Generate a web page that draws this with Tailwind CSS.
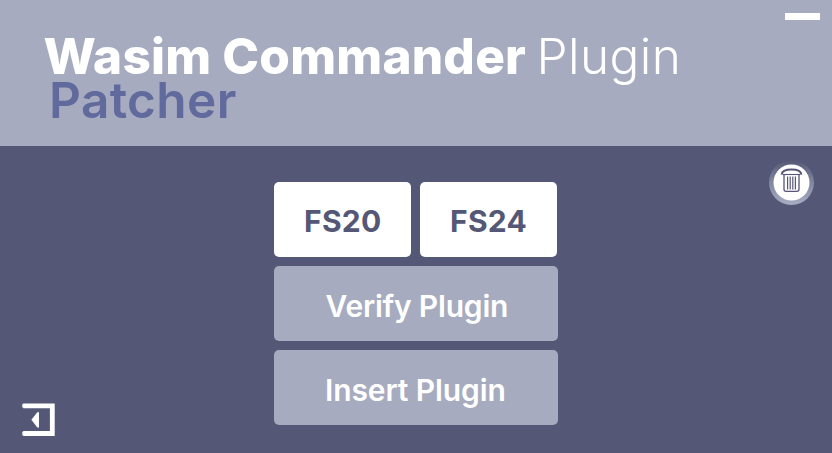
<!DOCTYPE html>
<html lang="en">
<head>
<meta charset="utf-8">
<title>Wasim Commander Plugin Patcher</title>
<script src="https://cdn.jsdelivr.net/npm/@tailwindcss/browser@4"></script>
</head>
<body class="flex h-screen w-screen flex-col overflow-hidden bg-[#545876] font-['Inter',sans-serif]">
<header class="flex h-[146px] shrink-0 items-start justify-between bg-[#a6abbf] pr-3">
  <h1 class="pt-[34px] pl-[43.5px] text-[49.5px] leading-[44px] whitespace-nowrap text-white">
    <span class="block"><span class="font-extrabold tracking-[0.2px]">Wasim Commander</span><span class="ml-[10.5px] font-light tracking-[0.4px]">Plugin</span></span>
    <span class="block pl-[5.5px] font-semibold tracking-[0.4px] text-[#616a9c]">Patcher</span>
  </h1>
  <button aria-label="Minimize" class="mt-[13px] h-[7px] w-[35px] bg-white"></button>
</header>
<main class="grid grow grid-cols-[274px_284px_274px]">
  <div class="flex items-end pb-[17px] pl-[22px]">
    <button aria-label="Back">
      <svg class="block" width="33" height="33" viewBox="0 0 33 33" fill="none"><path d="M1.2 2.8H30.3V30.5H1.2" stroke="#fff" stroke-width="4.8"/><path d="M1 1.5V4.1M1 29.2V31.8" stroke="#fff" stroke-width="1.4" stroke-linecap="round"/><path d="M9.4 16.8L15.3 9.2H17V24.5H15.3Z" fill="#fff"/></svg>
    </button>
  </div>
  <div class="flex flex-col gap-[9px] pt-9 text-[30px] leading-[30px] whitespace-nowrap text-white">
    <div class="flex gap-[9px] text-[#545876]">
      <button class="flex h-[75px] w-[137px] items-center rounded-[5px] bg-white pt-[3px] pl-[30px] font-bold tracking-[0.3px]">FS20</button>
      <button class="flex h-[75px] w-[137px] items-center rounded-[5px] bg-white pt-[3px] pl-[30px] font-bold tracking-[0.3px]">FS24</button>
    </div>
    <button class="flex h-[75px] items-center rounded-[5px] bg-[#a6abbf] pt-[5px] pl-[51.5px] font-semibold tracking-[-0.2px]">Verify Plugin</button>
    <button class="flex h-[75px] items-center rounded-[5px] bg-[#a6abbf] pt-[5px] pl-[51px] font-semibold tracking-[-0.1px]">Insert Plugin</button>
  </div>
  <div class="flex items-start justify-end pt-[14px] pr-[17px]">
    <button aria-label="Delete">
      <svg class="block" width="47" height="47" viewBox="0 0 47 47" fill="none">
        <defs><linearGradient id="ring" x1="0" y1="0" x2="0" y2="1"><stop offset="0" stop-color="#545876"/><stop offset=".45" stop-color="#7d829d"/><stop offset="1" stop-color="#a9adc4"/></linearGradient></defs>
        <circle cx="23.5" cy="22.5" r="22.5" fill="url(#ring)"/>
        <circle cx="23.5" cy="22.5" r="18" fill="#fff"/>
        <g stroke="#545876"><path d="M13.6 14.6C14 11 17 9.5 23.5 9.5S33 11 33.4 14.6" stroke-width="2"/><path d="M14.8 14.5H32.2" stroke-width="1.1"/><path d="M16 15V29.2Q16 31.3 18 31.3H29Q31 31.3 31 29.2V15" stroke-width="1.3"/><path d="M19.6 16.5V29.5M22.2 16.5V29.5M24.8 16.5V29.5M27.4 16.5V29.5" stroke-width="1.2"/></g>
      </svg>
    </button>
  </div>
</main>
</body>
</html>
